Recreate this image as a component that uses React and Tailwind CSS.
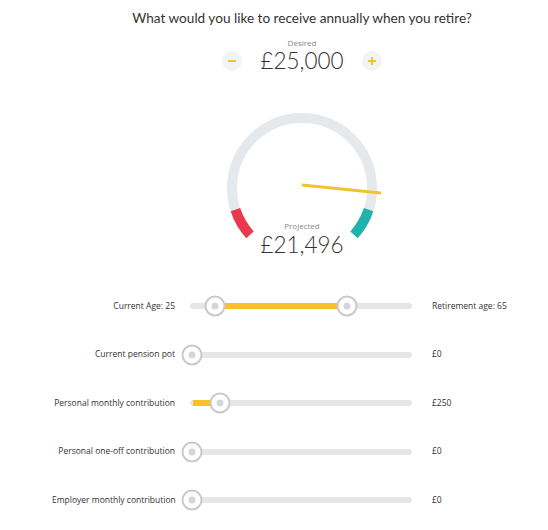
import React from "react";

const font = { fontFamily: "Lato, 'Open Sans', sans-serif" };
const small = { fontFamily: "'Open Sans', Lato, sans-serif" };

function Thumb({ left }) {
  return (
    <div
      className="absolute top-1/2 -translate-x-1/2 -translate-y-1/2 w-[21px] h-[21px] rounded-full bg-white border-2 border-[#c9c9c9] flex items-center justify-center"
      style={{ left }}
    >
      <div className="w-[7px] h-[7px] rounded-full bg-[#d6d6d6]" />
    </div>
  );
}

function Row({ label, value, thumbs, fill }) {
  return (
    <div className="flex items-center h-[48.5px]">
      <div className="w-[123px] text-right text-[8.5px] text-[#333] whitespace-nowrap" style={small}>
        {label}
      </div>
      <div className="relative ml-[15px] w-[222px] h-[6px] bg-[#e6e6e6] rounded-full">
        {fill && (
          <div
            className="absolute top-0 h-full bg-[#f4c325]"
            style={{ left: fill[0], width: fill[1] - fill[0] }}
          />
        )}
        {thumbs.map((t, i) => (
          <Thumb key={i} left={t} />
        ))}
      </div>
      <div className="ml-[20px] text-[8.5px] text-[#333] whitespace-nowrap" style={small}>
        {value}
      </div>
    </div>
  );
}

export default function App() {
  const cx = 85;
  const cy = 80;
  const r = 70;
  const pt = (deg) => {
    const a = (deg * Math.PI) / 180;
    return [cx + r * Math.cos(a), cy + r * Math.sin(a)];
  };
  const [s1x, s1y] = pt(140);
  const [e1x, e1y] = pt(40);
  const [r1x, r1y] = pt(138);
  const [r2x, r2y] = pt(162);
  const [t1x, t1y] = pt(18);
  const [t2x, t2y] = pt(42);

  return (
    <div className="w-[548px] h-[530px] bg-white overflow-hidden" style={font}>
      <div className="ml-[52px] w-[500px] flex flex-col items-center">
        <div className="pt-[9px] leading-[18px] text-[13.6px] text-[#333]">
          What would you like to receive annually when you retire?
        </div>
        <div className="mt-[11px] text-[8px] leading-[10px] text-[#888]" style={small}>
          Desired
        </div>
        <div className="mt-[3px] flex items-center h-[20px]">
          <div className="w-[20px] h-[20px] rounded-full bg-[#f2f3f5] flex items-center justify-center">
            <div className="w-[8px] h-[2px] bg-[#f4c325]" />
          </div>
          <div className="mx-[18px] text-[22.5px] font-light leading-[20px] text-[#333]">£25,000</div>
          <div className="w-[20px] h-[20px] rounded-full bg-[#f2f3f5] flex items-center justify-center relative">
            <div className="w-[8px] h-[2px] bg-[#f4c325]" />
            <div className="absolute w-[2px] h-[8px] bg-[#f4c325]" />
          </div>
        </div>
        <div className="relative mt-[37px] w-[170px] h-[160px]">
          <svg width="170" height="160" viewBox="0 0 170 160" className="block">
            <path
              d={`M ${s1x} ${s1y} A ${r} ${r} 0 1 1 ${e1x} ${e1y}`}
              fill="none"
              stroke="#e6e9ec"
              strokeWidth="10"
            />
            <path
              d={`M ${r1x} ${r1y} A ${r} ${r} 0 0 1 ${r2x} ${r2y}`}
              fill="none"
              stroke="#e8394f"
              strokeWidth="10"
            />
            <path
              d={`M ${t1x} ${t1y} A ${r} ${r} 0 0 1 ${t2x} ${t2y}`}
              fill="none"
              stroke="#21b3ab"
              strokeWidth="10"
            />
            <line x1={cx} y1={cy - 3} x2={cx + 79} y2={cy + 5} stroke="#f2c230" strokeWidth="3" />
          </svg>
          <div className="absolute left-0 right-0 top-[113px] flex flex-col items-center">
            <div className="text-[8px] leading-[9px] text-[#888]" style={small}>
              Projected
            </div>
            <div className="mt-[1px] text-[22.5px] font-light leading-[27px] text-[#333]">£21,496</div>
          </div>
        </div>
      </div>
      <div className="mt-[14px] ml-[52px]">
        <Row label="Current Age: 25" value="Retirement age: 65" thumbs={[25, 157]} fill={[25, 157]} />
        <Row label="Current pension pot" value="£0" thumbs={[2]} />
        <Row label="Personal monthly contribution" value="£250" thumbs={[30]} fill={[3, 30]} />
        <Row label="Personal one-off contribution" value="£0" thumbs={[2]} />
        <Row label="Employer monthly contribution" value="£0" thumbs={[2]} />
      </div>
    </div>
  );
}
